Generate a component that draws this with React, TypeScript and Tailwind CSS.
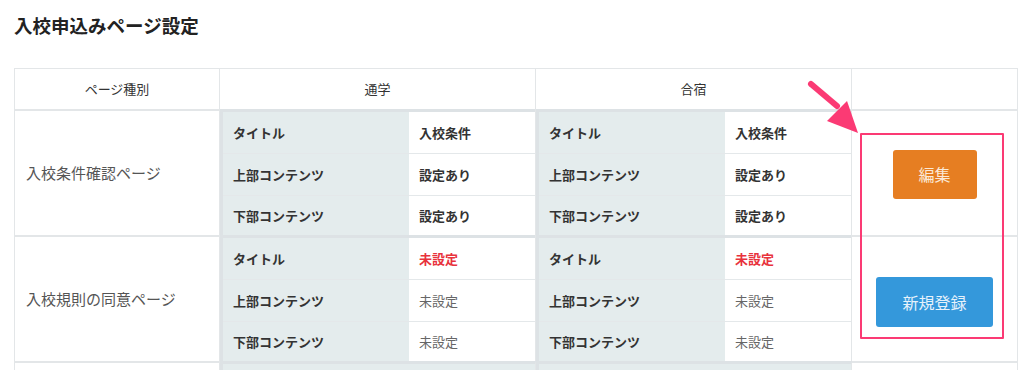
import React from 'react';

type Sub = { label: string; value: string; tone: 'set' | 'unsetRed' | 'unset' };

const rows: { name: string; data: Sub[] }[] = [
  {
    name: '入校条件確認ページ',
    data: [
      { label: 'タイトル', value: '入校条件', tone: 'set' },
      { label: '上部コンテンツ', value: '設定あり', tone: 'set' },
      { label: '下部コンテンツ', value: '設定あり', tone: 'set' },
    ],
  },
  {
    name: '入校規則の同意ページ',
    data: [
      { label: 'タイトル', value: '未設定', tone: 'unsetRed' },
      { label: '上部コンテンツ', value: '未設定', tone: 'unset' },
      { label: '下部コンテンツ', value: '未設定', tone: 'unset' },
    ],
  },
];

function SubTable({ data }: { data: Sub[] }) {
  return (
    <div className="border-t-[3px] border-l-[3px] border-[#dde2e5] flex flex-col">
      {data.map((d, i) => (
        <div key={i} className={`flex ${i < data.length - 1 ? 'h-[42px] border-b border-[#e4e8ea]' : 'h-[39px]'}`}>
          <div className="w-[186px] shrink-0 bg-[#e4eced] flex items-center pl-[10px] text-[13px] font-bold text-[#333]">
            {d.label}
          </div>
          <div
            className={`flex-1 bg-white flex items-center pl-[10px] text-[13px] ${
              d.tone === 'set'
                ? 'font-bold text-[#333]'
                : d.tone === 'unsetRed'
                ? 'font-bold text-[#e8323c]'
                : 'text-[#666]'
            }`}
          >
            {d.value}
          </div>
        </div>
      ))}
    </div>
  );
}

export default function App() {
  return (
    <div
      className="relative w-[1024px] h-[370px] overflow-hidden bg-white text-[#333]"
      style={{ fontFamily: '"Noto Sans CJK JP", "Noto Sans", sans-serif' }}
    >
      <h1 className="pl-[14px] pt-[12px] text-[18.5px] font-bold text-[#222] leading-[26px]">入校申込みページ設定</h1>

      <div className="ml-[14px] mt-[30px] w-[1004px] border-x border-t border-[#e3e6e8]">
        {/* header */}
        <div className="flex h-[40px] text-[13px] text-[#333]">
          <div className="w-[205px] flex items-center justify-center border-r border-[#e3e6e8]">ページ種別</div>
          <div className="w-[316px] flex items-center justify-center border-r border-[#e3e6e8]">通学</div>
          <div className="w-[316px] flex items-center justify-center border-r border-[#e3e6e8]">合宿</div>
          <div className="flex-1" />
        </div>

        {rows.map((r, idx) => (
          <div key={idx} className="flex">
            <div className="w-[205px] flex items-center pl-[11px] text-[15px] text-[#555] border-t-2 border-[#e3e6e8] border-r">
              {r.name}
            </div>
            <div className="w-[316px] border-r border-[#e3e6e8]">
              <SubTable data={r.data} />
            </div>
            <div className="w-[316px] border-r border-[#e3e6e8]">
              <SubTable data={r.data} />
            </div>
            <div className="flex-1 flex items-center justify-center border-t-2 border-[#e3e6e8]">
              {idx === 0 ? (
                <button className="w-[84px] h-[49px] mt-[2px] rounded-[3px] bg-[#e67e22] text-[#fbe9d6] text-[16px]">
                  編集
                </button>
              ) : (
                <button className="w-[117px] h-[50px] mt-[6px] rounded-[3px] bg-[#3498db] text-[#e6f2fb] text-[16px]">
                  新規登録
                </button>
              )}
            </div>
          </div>
        ))}

        <div className="flex h-[20px]">
          <div className="w-[205px] border-r border-t-2 border-[#e3e6e8]" />
          <div className="w-[316px] border-r border-[#e3e6e8] border-t-[3px] border-t-[#dde2e5] border-l-[3px] border-l-[#dde2e5] bg-[#e4eced]" />
          <div className="w-[316px] border-r border-[#e3e6e8] border-t-[3px] border-t-[#dde2e5] border-l-[3px] border-l-[#dde2e5] bg-[#e4eced]" />
          <div className="flex-1 border-t-2 border-[#e3e6e8]" />
        </div>
      </div>

      {/* annotation */}
      <div className="absolute left-[860px] top-[133px] w-[144px] h-[206px] border-2 border-[#fb3a74] rounded-[1px]" />
      <svg className="absolute left-[800px] top-[75px]" width="70" height="70" viewBox="0 0 70 70">
        <path d="M11 9 L37 31" stroke="#fb3a74" strokeWidth="6" strokeLinecap="round" />
        <path d="M58 58 L27 46 L47 26 Z" fill="#fb3a74" />
      </svg>
    </div>
  );
}
